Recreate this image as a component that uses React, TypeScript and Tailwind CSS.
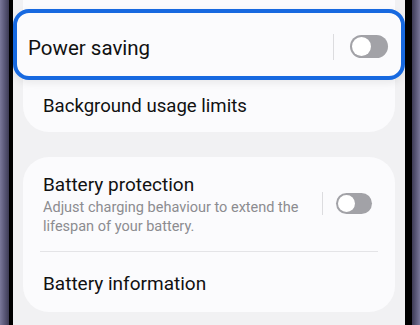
import React from "react";

const Toggle = ({ big }: { big?: boolean }) => (
  <div
    className={
      big
        ? "flex h-[23px] w-[38px] items-center rounded-full bg-[#a2a2a7] px-[2px]"
        : "flex h-[21px] w-[36px] items-center rounded-full bg-[#a2a2a7] px-[2px]"
    }
  >
    <div className={big ? "h-[19px] w-[19px] rounded-full bg-white" : "h-[17px] w-[17px] rounded-full bg-white"} />
  </div>
);

const App: React.FC = () => {
  return (
    <div
      className="flex h-[325px] w-[420px] overflow-hidden bg-[#f1f1f3] text-[#111111]"
      style={{ fontFamily: "Roboto, 'Noto Sans', sans-serif" }}
    >
      {/* left bezel */}
      <div className="w-[9px] bg-gradient-to-r from-[#7a789a] via-[#5a5878] to-[#3d3b55]" />
      <div className="w-[4px] bg-black" />

      {/* screen */}
      <div className="relative flex-1 bg-[#f1f1f3] px-[10px]">
        <div className="flex h-[132px] flex-col justify-end rounded-b-[26px] bg-[#fbfbfd]">
          <div className="flex h-[54px] items-center px-[20px] pt-[3px] text-[18.6px]">Background usage limits</div>
        </div>

        <div className="mt-[25px] rounded-[26px] bg-[#fbfbfd]">
          <div className="flex items-start pl-[20px] pr-[23px] pt-[16px] pb-[15px]">
            <div className="w-[268px]">
              <div className="text-[19px] leading-[24px]">Battery protection</div>
              <div className="mt-[1px] text-[14.5px] leading-[19px] text-[#8c8c90]">
                Adjust charging behaviour to extend the lifespan of your battery.
              </div>
            </div>
            <div className="ml-auto mt-[19px] flex items-center gap-[13px]">
              <div className="h-[23px] w-[1px] bg-[#dcdcdf]" />
              <Toggle />
            </div>
          </div>
          <div className="mx-[17px] h-[1px] bg-[#e4e4e7]" />
          <div className="flex h-[60px] items-center px-[20px] pt-[4px] text-[19px]">Battery information</div>
        </div>

        {/* highlighted, magnified row */}
        <div className="absolute left-0 top-[9px] flex h-[71px] w-[392px] items-center rounded-[16px] border-[4px] border-[#1769e0] bg-[#fbfbfd] pl-[11px] pr-[13px] shadow-[0_3px_8px_rgba(0,0,0,0.08)]">
          <span className="pt-[8px] text-[20.5px]">Power saving</span>
          <div className="ml-auto flex items-center gap-[16px] pt-[4px]">
            <div className="h-[26px] w-[1px] bg-[#dcdcdf]" />
            <Toggle big />
          </div>
        </div>
      </div>

      {/* right bezel */}
      <div className="w-[7px] bg-black" />
      <div className="w-[8px] bg-gradient-to-r from-[#3d3b55] via-[#5a5878] to-[#7a789a]" />
    </div>
  );
};

export default App;
